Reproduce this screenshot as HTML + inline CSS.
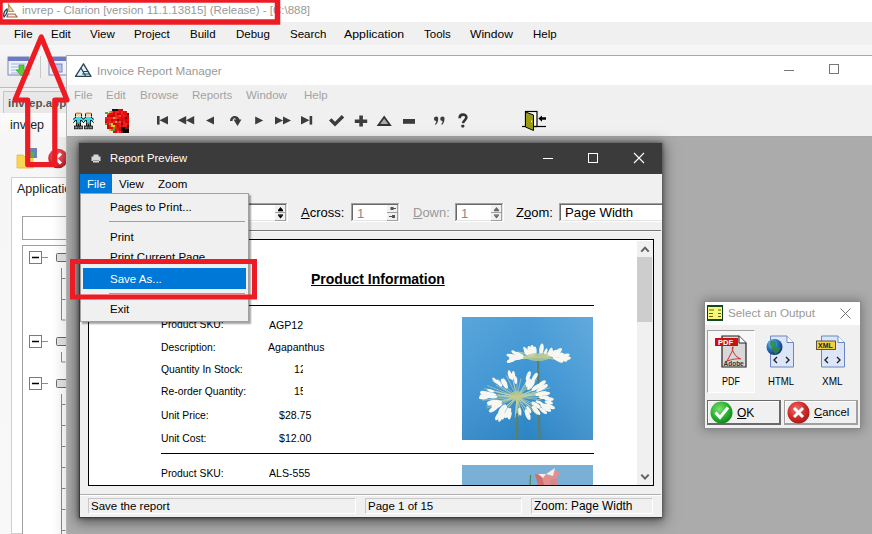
<!DOCTYPE html>
<html><head><meta charset="utf-8">
<style>
*{box-sizing:border-box;margin:0;padding:0}
html,body{width:872px;height:534px;overflow:hidden;background:#fff}
body{position:relative;font-family:"Liberation Sans",sans-serif;font-size:11.5px;color:#000}
.a{position:absolute}
.t{position:absolute;white-space:nowrap;line-height:1}
.rl{left:160.5px;font-size:11.5px;transform:scaleX(.9);transform-origin:0 0}
.rv{font-size:11.5px;transform:scaleX(.92);transform-origin:0 0}
.gm{color:#a3a3a3}
</style></head><body>

<!-- ===== Clarion IDE (background) ===== -->
<div class="t" style="left:22px;top:5px;font-size:11.5px;color:#999">invrep - Clarion [version 11.1.13815] (Release) - [C:\888]</div>
<svg class="a" style="left:2px;top:3px" width="18" height="16" viewBox="0 0 18 16">
<path d="M6.5 1.5 L11.5 8.5 L7 8.5 Z" fill="#f6e7a8" stroke="#b8925a" stroke-width="1.2"/>
<path d="M6 11 L13 11 L15 14 L5 14 Z" fill="#fde8d8" stroke="#a86040" stroke-width="1.2"/>
<path d="M5 6 C2 8 1 12 2 14 C4 12 6 9 5 6Z" fill="#d8eef8" stroke="#1c3c5a" stroke-width="1.2"/>
</svg>
<!-- menu bar -->
<div class="a" style="left:0;top:22px;width:872px;height:23px;background:#f0f0f0"></div>
<div class="t" style="left:14px;top:29px">File</div>
<div class="t" style="left:51px;top:29px">Edit</div>
<div class="t" style="left:90px;top:29px">View</div>
<div class="t" style="left:134px;top:29px">Project</div>
<div class="t" style="left:190px;top:29px">Build</div>
<div class="t" style="left:236px;top:29px">Debug</div>
<div class="t" style="left:290px;top:29px">Search</div>
<div class="t" style="left:344px;top:29px;transform:scaleX(1.07);transform-origin:0 0">Application</div>
<div class="t" style="left:424px;top:29px">Tools</div>
<div class="t" style="left:470px;top:29px;transform:scaleX(1.05);transform-origin:0 0">Window</div>
<div class="t" style="left:533px;top:29px">Help</div>
<!-- toolbar -->
<div class="a" style="left:0;top:45px;width:872px;height:43px;background:linear-gradient(#f7f7f7,#ebebeb)"></div>
<div class="a" style="left:0;top:87px;width:66px;height:1px;background:#bdbdbd"></div>
<svg class="a" style="left:7px;top:56px" width="60" height="22" viewBox="0 0 60 22">
<rect x="1" y="1" width="21" height="18" fill="#eef2fb" stroke="#7a86b8"/>
<rect x="1" y="1" width="21" height="4" fill="#6c78c8"/>
<g stroke="#a8b4d8"><path d="M4 8h15M4 11h15M4 14h15M4 17h15"/></g>
<path d="M12 9 h5 v5 h3 l-5.5 6 -5.5-6 h3z" fill="#5cc83a" stroke="#3a9a2a" stroke-width=".6"/>
<rect x="33" y="-3" width="1" height="25" fill="#c8c8c8"/>
<rect x="42" y="1" width="21" height="18" fill="#eef2fb" stroke="#7a86b8"/>
<rect x="42" y="1" width="21" height="4" fill="#6c78c8"/>
<rect x="46" y="8" width="9" height="8" fill="#b8c4e8" stroke="#7a86b8"/>
</svg>
<!-- left panel -->
<div class="a" style="left:0;top:88px;width:66px;height:446px;background:#f0f0f0"></div>
<div class="a" style="left:3px;top:91px;width:66px;height:23px;background:#e8e8e8;border:1px solid #c4c4c4"></div>
<div class="t" style="left:8px;top:98px;font-size:11.5px;font-weight:bold;color:#555">invrep.app</div>
<div class="a" style="left:0;top:113px;width:66px;height:421px;background:linear-gradient(#fbfbfb,#f6f6f6 25px,#f8f8f8)"></div>
<div class="t" style="left:10px;top:119px;font-size:12.5px;color:#222">invrep</div>
<svg class="a" style="left:16px;top:146px" width="52" height="24" viewBox="0 0 52 24">
<path d="M1 9 h6 l2 2 h8 v11 h-16z" fill="#f8d850" stroke="#e8b830" stroke-width=".8"/>
<rect x="14" y="2" width="7" height="10" fill="#6c82b8"/>
<path d="M13 6 h5 v5 h-5z" fill="#4cb848"/>
<defs><radialGradient id="rc" cx=".45" cy=".35" r=".7"><stop offset="0" stop-color="#f06a70"/><stop offset=".7" stop-color="#cc2a32"/><stop offset="1" stop-color="#a01820"/></radialGradient></defs>
<circle cx="42" cy="12.5" r="9.8" fill="url(#rc)"/>
<path d="M45 7.5 l-5.2 5 5.2 5" fill="none" stroke="#fff" stroke-width="3"/>
</svg>
<div class="a" style="left:11px;top:177px;width:60px;height:357px;background:#fff;border:1px solid #d0d0d0"></div>
<div class="t" style="left:17px;top:183px;font-size:12.5px;color:#222">Applicatio</div>
<div class="a" style="left:22px;top:216px;width:50px;height:24px;border:1px solid #a0a0a0;background:#fff"></div>
<div class="a" style="left:22px;top:245px;width:50px;height:300px;border:1px solid #a0a0a0;background:#fff"></div>
<svg class="a" style="left:22px;top:245px" width="44" height="289" viewBox="22 245 44 289">
<g fill="#fff" stroke="#7a7a7a" stroke-width="1">
<rect x="29.5" y="251.5" width="12" height="12"/><rect x="29.5" y="335.5" width="12" height="12"/><rect x="29.5" y="377.5" width="12" height="12"/>
</g>
<g stroke="#000" stroke-width="1.6"><path d="M32 257.5h7M32 341.5h7M32 383.5h7"/></g>
<g stroke="#8a8a8a" stroke-width="1" fill="none">
<path d="M42 257.5h6M42 341.5h6M42 383.5h6"/>
<path d="M61.5 268v52h4M61.5 278.5h4M61.5 299.5h4"/>
<path d="M61.5 352v10h4"/>
<path d="M61.5 394v140M61.5 404.5h4M61.5 425.5h4M61.5 446.5h4M61.5 467.5h4M61.5 488.5h4M61.5 509.5h4M61.5 530.5h4"/>
</g>
<g fill="#e4e4e4" stroke="#6a6a6a" stroke-width="1">
<rect x="56.5" y="253.5" width="12" height="8" rx="1"/><rect x="56.5" y="337.5" width="12" height="8" rx="1"/><rect x="56.5" y="379.5" width="12" height="8" rx="1"/>
</g>
</svg>
<div class="a" style="left:52px;top:137px;width:14px;height:397px;background:linear-gradient(90deg,rgba(0,0,0,0),rgba(0,0,0,.07))"></div>

<!-- ===== Invoice Report Manager ===== -->
<div class="a" style="left:66px;top:55px;width:806px;height:479px;background:#ababab;border-left:1px solid #b8b8b8;border-top:1px solid #a8a8a8"></div>
<div class="a" style="left:67px;top:56px;width:805px;height:29px;background:#fff"></div>
<svg class="a" style="left:74px;top:62px" width="19" height="16" viewBox="0 0 19 16">
<path d="M9.5 1.8 L17 14.4 L1.5 14.4 Z" fill="#dff3fb" stroke="#27455a" stroke-width="1.3" stroke-linejoin="round"/>
<path d="M7 6 L11.5 14 M9.5 9.5 L14.3 9.5 M8.2 12 L15.5 12" stroke="#27455a" stroke-width="1.2" fill="none"/>
</svg>
<div class="t" style="left:97px;top:65px;font-size:11.7px;color:#999">Invoice Report Manager</div>
<div class="a" style="left:784px;top:70px;width:10px;height:1px;background:#777"></div>
<div class="a" style="left:829px;top:64px;width:10px;height:10px;border:1px solid #777"></div>
<div class="a" style="left:67px;top:85px;width:805px;height:51px;background:#f0f0f0"></div>
<div class="t gm" style="left:74px;top:90px">File</div>
<div class="t gm" style="left:106px;top:90px">Edit</div>
<div class="t gm" style="left:140px;top:90px">Browse</div>
<div class="t gm" style="left:192px;top:90px">Reports</div>
<div class="t gm" style="left:246px;top:90px">Window</div>
<div class="t gm" style="left:304px;top:90px">Help</div>
<svg class="a" style="left:67px;top:105px" width="500" height="31" viewBox="67 105 500 31">
<!-- people -->
<g transform="translate(0 0)">
<rect x="76" y="113" width="5" height="3.5" fill="#f4d4a8"/><rect x="76" y="112.6" width="5" height="1.2" fill="#c87838"/>
<path d="M75.5 113.5 v3 M81.5 113.5 v3" stroke="#111" stroke-width="1"/>
<path d="M76 117 H81 L84 119.5 L82.5 121.5 H81 V123 H76 V121.5 H74.5 L73 119.5Z" fill="#30e0f0"/>
<path d="M73.2 119.3 L76 117 M81 117 L83.8 119.3 M73.3 122.8 L75.8 120 M83.7 122.8 L81.2 120" stroke="#111" stroke-width="1"/>
<path d="M76.5 120 v2.5 M80.5 120 v2.5" stroke="#111" stroke-width=".9"/>
<rect x="76" y="122.5" width="5" height="3.5" fill="#708070"/>
<path d="M76.5 122.5 v4 M80.5 122.5 v4 M78.5 124 v2.5" stroke="#111" stroke-width=".9"/>
<rect x="74.5" y="126" width="3.5" height="2.8" fill="#888" stroke="#111" stroke-width=".8"/>
<rect x="79" y="126" width="3.5" height="2.8" fill="#888" stroke="#111" stroke-width=".8"/>
</g><g transform="translate(10 0)">
<rect x="76" y="113" width="5" height="3.5" fill="#f4d4a8"/><rect x="76" y="112.6" width="5" height="1.2" fill="#c87838"/>
<path d="M75.5 113.5 v3 M81.5 113.5 v3" stroke="#111" stroke-width="1"/>
<path d="M76 117 H81 L84 119.5 L82.5 121.5 H81 V123 H76 V121.5 H74.5 L73 119.5Z" fill="#30e0f0"/>
<path d="M73.2 119.3 L76 117 M81 117 L83.8 119.3 M73.3 122.8 L75.8 120 M83.7 122.8 L81.2 120" stroke="#111" stroke-width="1"/>
<path d="M76.5 120 v2.5 M80.5 120 v2.5" stroke="#111" stroke-width=".9"/>
<rect x="76" y="122.5" width="5" height="3.5" fill="#708070"/>
<path d="M76.5 122.5 v4 M80.5 122.5 v4 M78.5 124 v2.5" stroke="#111" stroke-width=".9"/>
<rect x="74.5" y="126" width="3.5" height="2.8" fill="#888" stroke="#111" stroke-width=".8"/>
<rect x="79" y="126" width="3.5" height="2.8" fill="#888" stroke="#111" stroke-width=".8"/>
</g>
<!-- flower -->
<g shape-rendering="crispEdges"><rect x="113" y="109" width="2" height="2" fill="#ff4040"/><rect x="115" y="109" width="2" height="2" fill="#d00808"/><rect x="117" y="109" width="2" height="2" fill="#d00808"/><rect x="119" y="109" width="2" height="2" fill="#e01010"/><rect x="121" y="109" width="2" height="2" fill="#d00808"/><rect x="109" y="111" width="2" height="2" fill="#f0a020"/><rect x="111" y="111" width="2" height="2" fill="#ff4040"/><rect x="113" y="111" width="2" height="2" fill="#d00808"/><rect x="115" y="111" width="2" height="2" fill="#f02020"/><rect x="117" y="111" width="2" height="2" fill="#f02020"/><rect x="119" y="111" width="2" height="2" fill="#e01010"/><rect x="121" y="111" width="2" height="2" fill="#f02020"/><rect x="123" y="111" width="2" height="2" fill="#e01010"/><rect x="125" y="111" width="2" height="2" fill="#e01010"/><rect x="107" y="113" width="2" height="2" fill="#ff4040"/><rect x="109" y="113" width="2" height="2" fill="#e01010"/><rect x="111" y="113" width="2" height="2" fill="#e01010"/><rect x="113" y="113" width="2" height="2" fill="#d00808"/><rect x="115" y="113" width="2" height="2" fill="#f02020"/><rect x="117" y="113" width="2" height="2" fill="#d00808"/><rect x="119" y="113" width="2" height="2" fill="#d00808"/><rect x="121" y="113" width="2" height="2" fill="#f02020"/><rect x="123" y="113" width="2" height="2" fill="#e01010"/><rect x="125" y="113" width="2" height="2" fill="#e01010"/><rect x="127" y="113" width="2" height="2" fill="#700808"/><rect x="107" y="115" width="2" height="2" fill="#d00808"/><rect x="109" y="115" width="2" height="2" fill="#d00808"/><rect x="111" y="115" width="2" height="2" fill="#d00808"/><rect x="113" y="115" width="2" height="2" fill="#d00808"/><rect x="115" y="115" width="2" height="2" fill="#f02020"/><rect x="117" y="115" width="2" height="2" fill="#f02020"/><rect x="119" y="115" width="2" height="2" fill="#ff4040"/><rect x="121" y="115" width="2" height="2" fill="#e01010"/><rect x="123" y="115" width="2" height="2" fill="#f02020"/><rect x="125" y="115" width="2" height="2" fill="#e01010"/><rect x="127" y="115" width="2" height="2" fill="#d00808"/><rect x="105" y="117" width="2" height="2" fill="#f02020"/><rect x="107" y="117" width="2" height="2" fill="#f02020"/><rect x="109" y="117" width="2" height="2" fill="#f02020"/><rect x="111" y="117" width="2" height="2" fill="#f02020"/><rect x="113" y="117" width="2" height="2" fill="#f0a020"/><rect x="115" y="117" width="2" height="2" fill="#ff4040"/><rect x="117" y="117" width="2" height="2" fill="#f02020"/><rect x="119" y="117" width="2" height="2" fill="#e01010"/><rect x="121" y="117" width="2" height="2" fill="#e01010"/><rect x="123" y="117" width="2" height="2" fill="#e01010"/><rect x="125" y="117" width="2" height="2" fill="#700808"/><rect x="127" y="117" width="2" height="2" fill="#d00808"/><rect x="105" y="119" width="2" height="2" fill="#e01010"/><rect x="107" y="119" width="2" height="2" fill="#e01010"/><rect x="109" y="119" width="2" height="2" fill="#f02020"/><rect x="111" y="119" width="2" height="2" fill="#d00808"/><rect x="113" y="119" width="2" height="2" fill="#e01010"/><rect x="115" y="119" width="2" height="2" fill="#e01010"/><rect x="117" y="119" width="2" height="2" fill="#700808"/><rect x="119" y="119" width="2" height="2" fill="#e01010"/><rect x="121" y="119" width="2" height="2" fill="#d00808"/><rect x="123" y="119" width="2" height="2" fill="#e01010"/><rect x="125" y="119" width="2" height="2" fill="#d00808"/><rect x="127" y="119" width="2" height="2" fill="#e01010"/><rect x="105" y="121" width="2" height="2" fill="#d00808"/><rect x="107" y="121" width="2" height="2" fill="#f02020"/><rect x="109" y="121" width="2" height="2" fill="#f02020"/><rect x="111" y="121" width="2" height="2" fill="#e01010"/><rect x="113" y="121" width="2" height="2" fill="#f02020"/><rect x="115" y="121" width="2" height="2" fill="#f0a020"/><rect x="117" y="121" width="2" height="2" fill="#f02020"/><rect x="119" y="121" width="2" height="2" fill="#ff4040"/><rect x="121" y="121" width="2" height="2" fill="#d00808"/><rect x="123" y="121" width="2" height="2" fill="#f02020"/><rect x="125" y="121" width="2" height="2" fill="#d00808"/><rect x="127" y="121" width="2" height="2" fill="#d00808"/><rect x="105" y="123" width="2" height="2" fill="#60a030"/><rect x="107" y="123" width="2" height="2" fill="#e01010"/><rect x="109" y="123" width="2" height="2" fill="#60a030"/><rect x="111" y="123" width="2" height="2" fill="#e8c020"/><rect x="113" y="123" width="2" height="2" fill="#d00808"/><rect x="115" y="123" width="2" height="2" fill="#d00808"/><rect x="117" y="123" width="2" height="2" fill="#e01010"/><rect x="119" y="123" width="2" height="2" fill="#f02020"/><rect x="121" y="123" width="2" height="2" fill="#700808"/><rect x="123" y="123" width="2" height="2" fill="#f02020"/><rect x="125" y="123" width="2" height="2" fill="#f02020"/><rect x="127" y="123" width="2" height="2" fill="#e01010"/><rect x="107" y="125" width="2" height="2" fill="#d00808"/><rect x="109" y="125" width="2" height="2" fill="#f02020"/><rect x="111" y="125" width="2" height="2" fill="#e8c020"/><rect x="113" y="125" width="2" height="2" fill="#f0d030"/><rect x="115" y="125" width="2" height="2" fill="#f02020"/><rect x="117" y="125" width="2" height="2" fill="#d00808"/><rect x="119" y="125" width="2" height="2" fill="#f02020"/><rect x="121" y="125" width="2" height="2" fill="#e01010"/><rect x="123" y="125" width="2" height="2" fill="#f02020"/><rect x="125" y="125" width="2" height="2" fill="#f02020"/><rect x="127" y="125" width="2" height="2" fill="#700808"/><rect x="107" y="127" width="2" height="2" fill="#d00808"/><rect x="109" y="127" width="2" height="2" fill="#e01010"/><rect x="111" y="127" width="2" height="2" fill="#e01010"/><rect x="113" y="127" width="2" height="2" fill="#60a030"/><rect x="115" y="127" width="2" height="2" fill="#f02020"/><rect x="117" y="127" width="2" height="2" fill="#e01010"/><rect x="119" y="127" width="2" height="2" fill="#e01010"/><rect x="121" y="127" width="2" height="2" fill="#101010"/><rect x="123" y="127" width="2" height="2" fill="#101010"/><rect x="125" y="127" width="2" height="2" fill="#802010"/><rect x="127" y="127" width="2" height="2" fill="#802010"/><rect x="109" y="129" width="2" height="2" fill="#e8c020"/><rect x="111" y="129" width="2" height="2" fill="#60a030"/><rect x="113" y="129" width="2" height="2" fill="#60a030"/><rect x="115" y="129" width="2" height="2" fill="#e01010"/><rect x="117" y="129" width="2" height="2" fill="#f02020"/><rect x="119" y="129" width="2" height="2" fill="#d00808"/><rect x="121" y="129" width="2" height="2" fill="#101010"/><rect x="123" y="129" width="2" height="2" fill="#101010"/><rect x="125" y="129" width="2" height="2" fill="#101010"/><rect x="127" y="129" width="2" height="2" fill="#0a0a0a"/><rect x="113" y="131" width="2" height="2" fill="#e01010"/><rect x="115" y="131" width="2" height="2" fill="#e01010"/><rect x="117" y="131" width="2" height="2" fill="#ff4040"/><rect x="119" y="131" width="2" height="2" fill="#f02020"/><rect x="121" y="131" width="2" height="2" fill="#802010"/><rect x="123" y="131" width="2" height="2" fill="#0a0a0a"/><rect x="125" y="131" width="2" height="2" fill="#0a0a0a"/><rect x="127" y="131" width="2" height="2" fill="#0a0a0a"/><rect x="112" y="109" width="6" height="1.5" fill="#111"/><rect x="105" y="112" width="3" height="2" fill="#60a040"/></g>
<g fill="#3c3c3c">
<rect x="157" y="116" width="2.6" height="8.6"/><path d="M159.5 120.3 L168 116 V124.6Z"/>
<path d="M178 120.3 L186.2 116 V124.6Z M186 120.3 L194.2 116 V124.6Z"/>
<path d="M206 120.5 L214 116.5 V124.5Z"/>
<path d="M230 121 C230 115 238 114 239.5 119.5 L241.5 119.5 L237.5 126 L233.5 119.5 L236 119.5 C235 117.5 232.5 118 232.5 121Z"/>
<path d="M263.2 120.6 L255.2 116.6 V124.6Z"/>
<path d="M283 120.5 L275 116.4 V124.6Z M291 120.5 L283 116.4 V124.6Z"/>
<path d="M309.5 120.3 L301 116 V124.6Z"/><rect x="309.6" y="116" width="2.6" height="8.6"/>
<path d="M329 120.5 L331.5 118.2 L335 121.8 L341.7 115 L344.2 117.4 L335 126.6Z"/>
<path d="M359.3 115.6 h3.6 v3.8 h4.3 v3.5 h-4.3 v3.7 h-3.6 v-3.7 h-4.5 v-3.5 h4.5z"/>
<rect x="403" y="119" width="12" height="4.8"/>
<path d="M436 116.6 a2.2 2.2 0 0 1 2.2 2.4 c0 2.6 -1 4.6 -2.6 5.9 l-.6 -.6 c.8 -1 1.2 -2 1.3 -3.2 a2.2 2.2 0 0 1 -.3 -4.5z M442.3 116.6 a2.2 2.2 0 0 1 2.2 2.4 c0 2.6 -1 4.6 -2.6 5.9 l-.6 -.6 c.8 -1 1.2 -2 1.3 -3.2 a2.2 2.2 0 0 1 -.3 -4.5z"/>
</g>
<path d="M384.2 117 L390 125 H378.4Z" fill="#aaa" stroke="#333" stroke-width="1.8" stroke-linejoin="miter"/>
<path d="M459.6 118.2 C459.6 113.5 466.4 113.6 466.4 117.6 C466.4 119.6 463.3 120.6 463 123.2" fill="none" stroke="#333" stroke-width="2.6"/>
<rect x="461.3" y="124.8" width="3" height="2.8" rx=".8" fill="#333"/>
<!-- door -->
<rect x="525.5" y="111.5" width="11.5" height="15" fill="#fff" stroke="#000" stroke-width="1.2"/>
<path d="M522 126.5 H546" stroke="#000" stroke-width="1.2"/>
<path d="M525.5 112 L533.5 115 V130.5 L525.5 127Z" fill="#9c9c14" stroke="#000" stroke-width="1"/>
<rect x="531" y="120.5" width="1.2" height="1.8" fill="#f0f040"/>
<path d="M538.3 118.5 L542 115.4 V117.3 H546 V119.8 H542 V121.7Z" fill="#000"/>
</svg>
<div class="a" style="left:67px;top:136px;width:805px;height:1px;background:#a8a8a8"></div>

<!-- ===== Report Preview ===== -->
<div class="a" style="left:79px;top:143px;width:583px;height:375px;border-bottom-color:#555;background:#f0f0f0;border:1px solid #3a3a3a;border-top:none;border-right:none;box-shadow:0 0 3px 1px rgba(0,0,0,.3),0 2px 12px 2px rgba(0,0,0,.5)"></div>
<div class="a" style="left:79px;top:143px;width:583px;height:31px;background:#3b3b3b"></div>
<svg class="a" style="left:91px;top:154px" width="10" height="9" viewBox="0 0 10 9">
<path d="M2.5 0.5 H7.5 V2.5 H9.5 V7 H8 V8.5 H2 V7 H0.5 V2.5 H2.5Z" fill="#d8d8d8"/>
<rect x="2" y="6" width="6" height="1" fill="#9a9a9a"/>
</svg>
<div class="t" style="left:110px;top:153px;font-size:11.3px;color:#fff">Report Preview</div>
<div class="a" style="left:543px;top:158px;width:10px;height:1px;background:#fff"></div>
<div class="a" style="left:588px;top:153px;width:10px;height:10px;border:1px solid #fff"></div>
<svg class="a" style="left:633px;top:152px" width="12" height="12" viewBox="0 0 12 12"><path d="M1 1L11 11M11 1L1 11" stroke="#fff" stroke-width="1.1"/></svg>
<div class="a" style="left:80px;top:174px;width:32px;height:19px;background:#0078d7"></div>
<div class="t" style="left:87px;top:179px;color:#fff">File</div>
<div class="t" style="left:119px;top:179px">View</div>
<div class="t" style="left:158px;top:179px">Zoom</div>
<!-- toolbar -->
<svg class="a" style="left:200px;top:203px" width="462" height="19" viewBox="200 203 462 19" shape-rendering="crispEdges">
<!-- pages edit -->
<rect x="200" y="203" width="88" height="19" fill="#fff"/>
<path d="M200 203.5H288M200 204.5H287" stroke="#a0a0a0"/><path d="M200 204.5H287" stroke="#696969"/>
<path d="M287.5 203V222M200 221.5H288" stroke="#fff"/><path d="M286.5 204V221M200 220.5H287" stroke="#e3e3e3"/>
<rect x="275" y="205" width="11" height="7.5" fill="#f0f0f0"/><rect x="275" y="213" width="11" height="7.5" fill="#f0f0f0"/>
<path d="M275 212.5H286M285.5 205V212" stroke="#a0a0a0"/><path d="M275 220.5H286M285.5 213V220.5" stroke="#a0a0a0"/>
<!-- across edit -->
<rect x="351" y="203" width="49" height="19" fill="#fff"/>
<path d="M351 203.5H400M351.5 203V222" stroke="#a0a0a0"/><path d="M352 204.5H399M352.5 204V221" stroke="#696969"/>
<path d="M399.5 203V222M351 221.5H400" stroke="#fff"/><path d="M398.5 204V221M352 220.5H399" stroke="#e3e3e3"/>
<rect x="387" y="205" width="11" height="7.5" fill="#f0f0f0"/><rect x="387" y="213" width="11" height="7.5" fill="#f0f0f0"/>
<path d="M387 212.5H398M397.5 205V212" stroke="#a0a0a0"/><path d="M387 220.5H398M397.5 213V220.5" stroke="#a0a0a0"/>
<!-- down edit -->
<rect x="455" y="203" width="49" height="19" fill="#fff"/>
<path d="M455 203.5H504M455.5 203V222" stroke="#a0a0a0"/><path d="M456 204.5H503M456.5 204V221" stroke="#696969"/>
<path d="M503.5 203V222M455 221.5H504" stroke="#fff"/><path d="M502.5 204V221M456 220.5H503" stroke="#e3e3e3"/>
<rect x="491" y="205" width="11" height="7.5" fill="#f0f0f0"/><rect x="491" y="213" width="11" height="7.5" fill="#f0f0f0"/>
<path d="M491 212.5H502M501.5 205V212" stroke="#a0a0a0"/><path d="M491 220.5H502M501.5 213V220.5" stroke="#a0a0a0"/>
<!-- zoom combo -->
<rect x="559" y="203" width="103" height="19" fill="#fff"/>
<path d="M559 203.5H662M559.5 203V222" stroke="#a0a0a0"/><path d="M560 204.5H662M560.5 204V221" stroke="#696969"/>
<path d="M559 221.5H662" stroke="#fff"/><path d="M560 220.5H662" stroke="#e3e3e3"/>
</svg>
<svg class="a" style="left:270px;top:203px" width="240" height="19" viewBox="270 203 240 19">
<path d="M280.5 207 L283 210 H278Z" fill="#000"/><rect x="278" y="210" width="5" height="1.3" fill="#000"/>
<path d="M280.5 218.6 L283 215.6 H278Z" fill="#000"/><rect x="278" y="214.4" width="5" height="1.3" fill="#000"/>
<rect x="390.5" y="207" width="3" height="3" fill="#555"/><path d="M393 208.5H396" stroke="#555"/>
<rect x="392" y="215" width="3" height="3" fill="#555"/><path d="M389 216.5H392" stroke="#555"/>
<path d="M496.5 207 L499 210 H494Z" fill="#666"/><rect x="494" y="210" width="5" height="1.3" fill="#666"/>
<path d="M496.5 218.6 L499 215.6 H494Z" fill="#666"/><rect x="494" y="214.4" width="5" height="1.3" fill="#666"/>
</svg>
<div class="t" style="left:301px;top:206px;font-size:13px"><u>A</u>cross:</div>
<div class="t" style="left:357px;top:207px;font-size:13px;color:#8a8a8a">1</div>
<div class="t" style="left:413px;top:206px;font-size:13px;color:#999"><u>D</u>own:</div>
<div class="t" style="left:461px;top:207px;font-size:13px;color:#8a8a8a">1</div>
<div class="t" style="left:516px;top:206px;font-size:13px">Z<u>o</u>om:</div>
<div class="t" style="left:565px;top:206px;font-size:13.2px">Page Width</div>
<div class="a" style="left:80px;top:230px;width:581px;height:1px;background:#777"></div>
<div class="a" style="left:80px;top:231px;width:581px;height:1px;background:#f8f8f8"></div>
<!-- report area -->
<div class="a" style="left:88px;top:239px;width:566px;height:247px;border:1px solid #000;background:#fff"></div>
<div class="t" style="left:311px;top:272px;font-size:14px;font-weight:bold;text-decoration:underline">Product Information</div>
<div class="a" style="left:161px;top:305px;width:433px;height:1px;background:#000"></div>
<div class="a" style="left:161px;top:453px;width:433px;height:1px;background:#000"></div>
<div class="rl t" style="top:319px">Product SKU:</div>
<div class="rl t" style="top:342px">Description:</div>
<div class="rl t" style="top:364px">Quantity In Stock:</div>
<div class="rl t" style="top:386px">Re-order Quantity:</div>
<div class="rl t" style="top:410px">Unit Price:</div>
<div class="rl t" style="top:433px">Unit Cost:</div>
<div class="rl t" style="top:468px">Product SKU:</div>
<div class="rv t" style="left:269px;top:320px">AGP12</div>
<div class="rv t" style="left:268px;top:342px">Agapanthus</div>
<div class="a" style="left:290px;top:360px;width:13px;height:40px;overflow:hidden"><div class="rv t" style="left:4px;top:4px">12</div><div class="rv t" style="left:4px;top:26px">15</div></div>
<div class="rv t" style="left:279px;top:410px">$28.75</div>
<div class="rv t" style="left:279px;top:433px">$12.00</div>
<div class="rv t" style="left:269px;top:468px">ALS-555</div>
<!-- photo 1 -->
<svg class="a" style="left:462px;top:317px" width="131" height="123" viewBox="0 0 131 123">
<defs><linearGradient id="sky" x1="0" y1="0" x2="0" y2="1"><stop offset="0" stop-color="#4c9ed8"/><stop offset="0.55" stop-color="#3b93d2"/><stop offset="1" stop-color="#2c84c4"/></linearGradient><linearGradient id="skyh" x1="0" y1="0" x2="1" y2="0"><stop offset="0" stop-color="#fff" stop-opacity=".08"/><stop offset=".5" stop-color="#fff" stop-opacity="0"/><stop offset="1" stop-color="#fff" stop-opacity=".12"/></linearGradient></defs>
<rect width="131" height="123" fill="url(#sky)"/><rect width="131" height="123" fill="url(#skyh)"/>
<path d="M55.5 82 L55 123" stroke="#5d7f63" stroke-width="2.2"/>
<path d="M76 42 L77.5 123" stroke="#5d7f63" stroke-width="2.2"/>
<path d="M76.0 40.0 L63.5 36.3" stroke="#c8d8a8" stroke-width=".8" opacity=".8"/>
<path d="M76.0 40.0 L86.3 36.2" stroke="#c8d8a8" stroke-width=".8" opacity=".8"/>
<path d="M76.0 40.0 L79.2 34.3" stroke="#c8d8a8" stroke-width=".8" opacity=".8"/>
<path d="M76.0 40.0 L53.6 41.7" stroke="#c8d8a8" stroke-width=".8" opacity=".8"/>
<path d="M76.0 40.0 L55.1 42.1" stroke="#c8d8a8" stroke-width=".8" opacity=".8"/>
<path d="M76.0 40.0 L58.7 41.1" stroke="#c8d8a8" stroke-width=".8" opacity=".8"/>
<path d="M76.0 40.0 L67.4 33.0" stroke="#c8d8a8" stroke-width=".8" opacity=".8"/>
<path d="M76.0 40.0 L56.5 40.0" stroke="#c8d8a8" stroke-width=".8" opacity=".8"/>
<path d="M76.0 40.0 L90.9 33.3" stroke="#c8d8a8" stroke-width=".8" opacity=".8"/>
<path d="M76.0 40.0 L82.9 34.5" stroke="#c8d8a8" stroke-width=".8" opacity=".8"/>
<path d="M76.0 40.0 L91.6 41.9" stroke="#c8d8a8" stroke-width=".8" opacity=".8"/>
<path d="M76.0 40.0 L96.4 39.6" stroke="#c8d8a8" stroke-width=".8" opacity=".8"/>
<path d="M76.0 40.0 L58.0 39.6" stroke="#c8d8a8" stroke-width=".8" opacity=".8"/>
<path d="M76.0 40.0 L56.2 34.9" stroke="#c8d8a8" stroke-width=".8" opacity=".8"/>
<path d="M76.0 40.0 L52.3 38.5" stroke="#c8d8a8" stroke-width=".8" opacity=".8"/>
<path d="M76.0 40.0 L87.8 35.2" stroke="#c8d8a8" stroke-width=".8" opacity=".8"/>
<path d="M76.0 40.0 L79.4 35.5" stroke="#c8d8a8" stroke-width=".8" opacity=".8"/>
<path d="M76.0 40.0 L57.4 41.4" stroke="#c8d8a8" stroke-width=".8" opacity=".8"/>
<path d="M76.0 40.0 L91.3 35.7" stroke="#c8d8a8" stroke-width=".8" opacity=".8"/>
<path d="M76.0 40.0 L58.9 35.4" stroke="#c8d8a8" stroke-width=".8" opacity=".8"/>
<path d="M76.0 40.0 L72.0 34.6" stroke="#c8d8a8" stroke-width=".8" opacity=".8"/>
<path d="M76.0 40.0 L100.5 37.7" stroke="#c8d8a8" stroke-width=".8" opacity=".8"/>
<path d="M76.0 40.0 L54.7 36.9" stroke="#c8d8a8" stroke-width=".8" opacity=".8"/>
<path d="M76.0 40.0 L79.0 32.5" stroke="#c8d8a8" stroke-width=".8" opacity=".8"/>
<path d="M76.0 40.0 L92.7 36.9" stroke="#c8d8a8" stroke-width=".8" opacity=".8"/>
<path d="M76.0 40.0 L92.4 42.1" stroke="#c8d8a8" stroke-width=".8" opacity=".8"/>
<path d="M76.0 40.0 L67.0 33.3" stroke="#c8d8a8" stroke-width=".8" opacity=".8"/>
<path d="M76.0 40.0 L53.0 39.3" stroke="#c8d8a8" stroke-width=".8" opacity=".8"/>
<path d="M76.0 40.0 L52.1 42.4" stroke="#c8d8a8" stroke-width=".8" opacity=".8"/>
<path d="M76.0 40.0 L97.7 37.1" stroke="#c8d8a8" stroke-width=".8" opacity=".8"/>
<path d="M76.0 40.0 L96.7 40.0" stroke="#c8d8a8" stroke-width=".8" opacity=".8"/>
<path d="M76.0 40.0 L93.9 35.5" stroke="#c8d8a8" stroke-width=".8" opacity=".8"/>
<path d="M76.0 40.0 L83.4 34.3" stroke="#c8d8a8" stroke-width=".8" opacity=".8"/>
<path d="M76.0 40.0 L104.9 38.9" stroke="#c8d8a8" stroke-width=".8" opacity=".8"/>
<ellipse cx="73.2" cy="33.1" rx="3.7" ry="1.4" transform="rotate(264 73.2 33.1)" fill="#f7f7f2"/>
<ellipse cx="95.3" cy="35.4" rx="6.0" ry="2.3" transform="rotate(318 95.3 35.4)" fill="#f7f7f2"/>
<ellipse cx="96.9" cy="38.7" rx="4.5" ry="1.7" transform="rotate(347 96.9 38.7)" fill="#f7f7f2"/>
<ellipse cx="87.9" cy="36.3" rx="4.7" ry="1.8" transform="rotate(310 87.9 36.3)" fill="#f7f7f2"/>
<ellipse cx="56.9" cy="39.1" rx="3.6" ry="1.4" transform="rotate(190 56.9 39.1)" fill="#f7f7f2"/>
<ellipse cx="93.6" cy="37.7" rx="4.1" ry="1.6" transform="rotate(334 93.6 37.7)" fill="#f7f7f2"/>
<ellipse cx="63.4" cy="33.2" rx="3.7" ry="1.4" transform="rotate(244 63.4 33.2)" fill="#f7f7f2"/>
<ellipse cx="70.8" cy="33.6" rx="5.7" ry="2.2" transform="rotate(258 70.8 33.6)" fill="#f7f7f2"/>
<ellipse cx="103.6" cy="38.3" rx="4.2" ry="1.6" transform="rotate(347 103.6 38.3)" fill="#f7f7f2"/>
<ellipse cx="68.3" cy="34.4" rx="5.7" ry="2.2" transform="rotate(250 68.3 34.4)" fill="#f7f7f2"/>
<ellipse cx="94.6" cy="41.8" rx="3.9" ry="1.5" transform="rotate(380 94.6 41.8)" fill="#f7f7f2"/>
<ellipse cx="57.3" cy="37.6" rx="4.7" ry="1.8" transform="rotate(206 57.3 37.6)" fill="#f7f7f2"/>
<ellipse cx="83.7" cy="34.7" rx="3.5" ry="1.3" transform="rotate(291 83.7 34.7)" fill="#f7f7f2"/>
<ellipse cx="68.5" cy="34.4" rx="4.9" ry="1.9" transform="rotate(251 68.5 34.4)" fill="#f7f7f2"/>
<ellipse cx="100.9" cy="42.3" rx="4.8" ry="1.8" transform="rotate(379 100.9 42.3)" fill="#f7f7f2"/>
<ellipse cx="88.3" cy="33.9" rx="3.6" ry="1.4" transform="rotate(298 88.3 33.9)" fill="#f7f7f2"/>
<ellipse cx="103.2" cy="40.7" rx="5.7" ry="2.2" transform="rotate(366 103.2 40.7)" fill="#f7f7f2"/>
<ellipse cx="97.5" cy="38.1" rx="4.5" ry="1.7" transform="rotate(341 97.5 38.1)" fill="#f7f7f2"/>
<ellipse cx="50.5" cy="40.6" rx="3.7" ry="1.4" transform="rotate(175 50.5 40.6)" fill="#f7f7f2"/>
<ellipse cx="56.1" cy="41.3" rx="3.9" ry="1.5" transform="rotate(166 56.1 41.3)" fill="#f7f7f2"/>
<ellipse cx="64.4" cy="36.1" rx="3.5" ry="1.3" transform="rotate(232 64.4 36.1)" fill="#f7f7f2"/>
<ellipse cx="56.9" cy="39.4" rx="4.4" ry="1.7" transform="rotate(186 56.9 39.4)" fill="#f7f7f2"/>
<ellipse cx="49.9" cy="43.1" rx="5.0" ry="1.9" transform="rotate(156 49.9 43.1)" fill="#f7f7f2"/>
<ellipse cx="55.1" cy="39.4" rx="4.4" ry="1.7" transform="rotate(186 55.1 39.4)" fill="#f7f7f2"/>
<ellipse cx="65.5" cy="35.6" rx="5.6" ry="2.1" transform="rotate(237 65.5 35.6)" fill="#f7f7f2"/>
<ellipse cx="96.8" cy="43.0" rx="4.7" ry="1.8" transform="rotate(388 96.8 43.0)" fill="#f7f7f2"/>
<ellipse cx="57.0" cy="40.8" rx="4.4" ry="1.7" transform="rotate(171 57.0 40.8)" fill="#f7f7f2"/>
<ellipse cx="52.7" cy="35.9" rx="3.9" ry="1.5" transform="rotate(214 52.7 35.9)" fill="#f7f7f2"/>
<ellipse cx="49.2" cy="43.2" rx="4.8" ry="1.8" transform="rotate(156 49.2 43.2)" fill="#f7f7f2"/>
<ellipse cx="51.6" cy="39.4" rx="3.6" ry="1.4" transform="rotate(185 51.6 39.4)" fill="#f7f7f2"/>
<ellipse cx="79.5" cy="32.1" rx="5.7" ry="2.2" transform="rotate(277 79.5 32.1)" fill="#f7f7f2"/>
<ellipse cx="91.5" cy="36.2" rx="4.4" ry="1.7" transform="rotate(317 91.5 36.2)" fill="#f7f7f2"/>
<ellipse cx="49.2" cy="38.7" rx="4.8" ry="1.8" transform="rotate(190 49.2 38.7)" fill="#f7f7f2"/>
<ellipse cx="96.2" cy="37.7" rx="4.1" ry="1.5" transform="rotate(337 96.2 37.7)" fill="#f7f7f2"/>
<ellipse cx="76" cy="40" rx="12" ry="4" fill="#b8c890" opacity=".8"/>
<path d="M55.0 80.0 L68.5 57.9" stroke="#c8d8a8" stroke-width=".8" opacity=".8"/>
<path d="M55.0 80.0 L74.8 62.5" stroke="#c8d8a8" stroke-width=".8" opacity=".8"/>
<path d="M55.0 80.0 L68.2 60.7" stroke="#c8d8a8" stroke-width=".8" opacity=".8"/>
<path d="M55.0 80.0 L59.1 98.6" stroke="#c8d8a8" stroke-width=".8" opacity=".8"/>
<path d="M55.0 80.0 L42.5 90.6" stroke="#c8d8a8" stroke-width=".8" opacity=".8"/>
<path d="M55.0 80.0 L79.0 82.8" stroke="#c8d8a8" stroke-width=".8" opacity=".8"/>
<path d="M55.0 80.0 L53.2 100.6" stroke="#c8d8a8" stroke-width=".8" opacity=".8"/>
<path d="M55.0 80.0 L81.0 75.1" stroke="#c8d8a8" stroke-width=".8" opacity=".8"/>
<path d="M55.0 80.0 L88.0 70.8" stroke="#c8d8a8" stroke-width=".8" opacity=".8"/>
<path d="M55.0 80.0 L79.7 75.2" stroke="#c8d8a8" stroke-width=".8" opacity=".8"/>
<path d="M55.0 80.0 L59.3 95.4" stroke="#c8d8a8" stroke-width=".8" opacity=".8"/>
<path d="M55.0 80.0 L62.6 94.6" stroke="#c8d8a8" stroke-width=".8" opacity=".8"/>
<path d="M55.0 80.0 L30.5 63.9" stroke="#c8d8a8" stroke-width=".8" opacity=".8"/>
<path d="M55.0 80.0 L69.8 64.5" stroke="#c8d8a8" stroke-width=".8" opacity=".8"/>
<path d="M55.0 80.0 L36.2 62.1" stroke="#c8d8a8" stroke-width=".8" opacity=".8"/>
<path d="M55.0 80.0 L81.3 90.3" stroke="#c8d8a8" stroke-width=".8" opacity=".8"/>
<path d="M55.0 80.0 L82.4 68.4" stroke="#c8d8a8" stroke-width=".8" opacity=".8"/>
<path d="M55.0 80.0 L55.0 61.6" stroke="#c8d8a8" stroke-width=".8" opacity=".8"/>
<path d="M55.0 80.0 L69.1 99.6" stroke="#c8d8a8" stroke-width=".8" opacity=".8"/>
<path d="M55.0 80.0 L38.8 99.0" stroke="#c8d8a8" stroke-width=".8" opacity=".8"/>
<path d="M55.0 80.0 L80.8 76.9" stroke="#c8d8a8" stroke-width=".8" opacity=".8"/>
<path d="M55.0 80.0 L26.4 93.6" stroke="#c8d8a8" stroke-width=".8" opacity=".8"/>
<path d="M55.0 80.0 L51.4 65.2" stroke="#c8d8a8" stroke-width=".8" opacity=".8"/>
<path d="M55.0 80.0 L70.5 90.6" stroke="#c8d8a8" stroke-width=".8" opacity=".8"/>
<path d="M55.0 80.0 L82.2 67.7" stroke="#c8d8a8" stroke-width=".8" opacity=".8"/>
<path d="M55.0 80.0 L75.1 97.6" stroke="#c8d8a8" stroke-width=".8" opacity=".8"/>
<path d="M55.0 80.0 L85.2 77.5" stroke="#c8d8a8" stroke-width=".8" opacity=".8"/>
<path d="M55.0 80.0 L38.1 95.4" stroke="#c8d8a8" stroke-width=".8" opacity=".8"/>
<path d="M55.0 80.0 L68.6 89.8" stroke="#c8d8a8" stroke-width=".8" opacity=".8"/>
<path d="M55.0 80.0 L84.8 76.3" stroke="#c8d8a8" stroke-width=".8" opacity=".8"/>
<path d="M55.0 80.0 L20.6 76.1" stroke="#c8d8a8" stroke-width=".8" opacity=".8"/>
<path d="M55.0 80.0 L24.0 89.1" stroke="#c8d8a8" stroke-width=".8" opacity=".8"/>
<path d="M55.0 80.0 L65.7 66.3" stroke="#c8d8a8" stroke-width=".8" opacity=".8"/>
<path d="M55.0 80.0 L54.7 96.4" stroke="#c8d8a8" stroke-width=".8" opacity=".8"/>
<path d="M55.0 80.0 L56.7 99.5" stroke="#c8d8a8" stroke-width=".8" opacity=".8"/>
<path d="M55.0 80.0 L53.4 97.7" stroke="#c8d8a8" stroke-width=".8" opacity=".8"/>
<path d="M55.0 80.0 L78.5 96.9" stroke="#c8d8a8" stroke-width=".8" opacity=".8"/>
<path d="M55.0 80.0 L38.5 94.4" stroke="#c8d8a8" stroke-width=".8" opacity=".8"/>
<path d="M55.0 80.0 L25.2 68.5" stroke="#c8d8a8" stroke-width=".8" opacity=".8"/>
<path d="M55.0 80.0 L24.6 91.1" stroke="#c8d8a8" stroke-width=".8" opacity=".8"/>
<path d="M55.0 80.0 L26.6 79.8" stroke="#c8d8a8" stroke-width=".8" opacity=".8"/>
<path d="M55.0 80.0 L35.1 78.0" stroke="#c8d8a8" stroke-width=".8" opacity=".8"/>
<path d="M55.0 80.0 L33.8 85.6" stroke="#c8d8a8" stroke-width=".8" opacity=".8"/>
<path d="M55.0 80.0 L87.7 80.5" stroke="#c8d8a8" stroke-width=".8" opacity=".8"/>
<path d="M55.0 80.0 L67.9 96.2" stroke="#c8d8a8" stroke-width=".8" opacity=".8"/>
<path d="M55.0 80.0 L50.5 61.0" stroke="#c8d8a8" stroke-width=".8" opacity=".8"/>
<path d="M55.0 80.0 L42.0 96.7" stroke="#c8d8a8" stroke-width=".8" opacity=".8"/>
<path d="M55.0 80.0 L24.4 72.6" stroke="#c8d8a8" stroke-width=".8" opacity=".8"/>
<path d="M55.0 80.0 L77.7 91.9" stroke="#c8d8a8" stroke-width=".8" opacity=".8"/>
<path d="M55.0 80.0 L55.2 96.2" stroke="#c8d8a8" stroke-width=".8" opacity=".8"/>
<path d="M55.0 80.0 L58.9 61.5" stroke="#c8d8a8" stroke-width=".8" opacity=".8"/>
<path d="M55.0 80.0 L25.3 71.9" stroke="#c8d8a8" stroke-width=".8" opacity=".8"/>
<path d="M55.0 80.0 L78.0 70.6" stroke="#c8d8a8" stroke-width=".8" opacity=".8"/>
<path d="M55.0 80.0 L33.7 67.9" stroke="#c8d8a8" stroke-width=".8" opacity=".8"/>
<path d="M55.0 80.0 L24.1 78.4" stroke="#c8d8a8" stroke-width=".8" opacity=".8"/>
<path d="M55.0 80.0 L27.8 85.6" stroke="#c8d8a8" stroke-width=".8" opacity=".8"/>
<path d="M55.0 80.0 L20.3 83.2" stroke="#c8d8a8" stroke-width=".8" opacity=".8"/>
<path d="M55.0 80.0 L44.3 58.5" stroke="#c8d8a8" stroke-width=".8" opacity=".8"/>
<path d="M55.0 80.0 L77.4 74.3" stroke="#c8d8a8" stroke-width=".8" opacity=".8"/>
<path d="M55.0 80.0 L22.3 71.5" stroke="#c8d8a8" stroke-width=".8" opacity=".8"/>
<ellipse cx="67.6" cy="66.7" rx="3.8" ry="1.4" transform="rotate(302 67.6 66.7)" fill="#f7f7f2"/>
<ellipse cx="33.8" cy="85.4" rx="4.1" ry="1.6" transform="rotate(159 33.8 85.4)" fill="#f7f7f2"/>
<ellipse cx="83.0" cy="89.2" rx="5.5" ry="2.1" transform="rotate(26 83.0 89.2)" fill="#f7f7f2"/>
<ellipse cx="74.0" cy="70.4" rx="5.3" ry="2.0" transform="rotate(323 74.0 70.4)" fill="#f7f7f2"/>
<ellipse cx="42.4" cy="66.7" rx="5.7" ry="2.2" transform="rotate(238 42.4 66.7)" fill="#f7f7f2"/>
<ellipse cx="79.2" cy="76.7" rx="5.9" ry="2.2" transform="rotate(348 79.2 76.7)" fill="#f7f7f2"/>
<ellipse cx="32.0" cy="91.4" rx="6.0" ry="2.3" transform="rotate(143 32.0 91.4)" fill="#f7f7f2"/>
<ellipse cx="66.8" cy="66.1" rx="4.6" ry="1.7" transform="rotate(300 66.8 66.1)" fill="#f7f7f2"/>
<ellipse cx="28.6" cy="78.3" rx="4.0" ry="1.5" transform="rotate(186 28.6 78.3)" fill="#f7f7f2"/>
<ellipse cx="41.6" cy="99.4" rx="3.5" ry="1.3" transform="rotate(115 41.6 99.4)" fill="#f7f7f2"/>
<ellipse cx="28.7" cy="73.8" rx="3.5" ry="1.3" transform="rotate(199 28.7 73.8)" fill="#f7f7f2"/>
<ellipse cx="40.0" cy="97.8" rx="4.8" ry="1.8" transform="rotate(119 40.0 97.8)" fill="#f7f7f2"/>
<ellipse cx="87.9" cy="89.4" rx="5.5" ry="2.1" transform="rotate(23 87.9 89.4)" fill="#f7f7f2"/>
<ellipse cx="77.7" cy="77.3" rx="4.2" ry="1.6" transform="rotate(350 77.7 77.3)" fill="#f7f7f2"/>
<ellipse cx="86.8" cy="85.4" rx="4.2" ry="1.6" transform="rotate(14 86.8 85.4)" fill="#f7f7f2"/>
<ellipse cx="74.0" cy="93.4" rx="5.8" ry="2.2" transform="rotate(47 74.0 93.4)" fill="#f7f7f2"/>
<ellipse cx="65.6" cy="64.7" rx="3.9" ry="1.5" transform="rotate(295 65.6 64.7)" fill="#f7f7f2"/>
<ellipse cx="81.1" cy="70.3" rx="5.3" ry="2.0" transform="rotate(331 81.1 70.3)" fill="#f7f7f2"/>
<ellipse cx="74.0" cy="88.0" rx="5.2" ry="2.0" transform="rotate(32 74.0 88.0)" fill="#f7f7f2"/>
<ellipse cx="34.8" cy="86.8" rx="5.8" ry="2.2" transform="rotate(153 34.8 86.8)" fill="#f7f7f2"/>
<ellipse cx="33.0" cy="63.5" rx="3.7" ry="1.4" transform="rotate(228 33.0 63.5)" fill="#f7f7f2"/>
<ellipse cx="69.0" cy="68.2" rx="5.7" ry="2.1" transform="rotate(308 69.0 68.2)" fill="#f7f7f2"/>
<ellipse cx="29.6" cy="85.1" rx="4.9" ry="1.9" transform="rotate(163 29.6 85.1)" fill="#f7f7f2"/>
<ellipse cx="77.8" cy="72.5" rx="3.8" ry="1.5" transform="rotate(334 77.8 72.5)" fill="#f7f7f2"/>
<ellipse cx="30.3" cy="77.2" rx="3.8" ry="1.4" transform="rotate(190 30.3 77.2)" fill="#f7f7f2"/>
<ellipse cx="66.8" cy="92.6" rx="4.0" ry="1.5" transform="rotate(58 66.8 92.6)" fill="#f7f7f2"/>
<ellipse cx="45.1" cy="96.0" rx="5.4" ry="2.1" transform="rotate(112 45.1 96.0)" fill="#f7f7f2"/>
<ellipse cx="47.8" cy="98.6" rx="3.9" ry="1.5" transform="rotate(104 47.8 98.6)" fill="#f7f7f2"/>
<ellipse cx="42.5" cy="92.0" rx="4.1" ry="1.6" transform="rotate(125 42.5 92.0)" fill="#f7f7f2"/>
<ellipse cx="87.0" cy="82.1" rx="4.9" ry="1.9" transform="rotate(6 87.0 82.1)" fill="#f7f7f2"/>
<ellipse cx="65.6" cy="97.6" rx="5.8" ry="2.2" transform="rotate(68 65.6 97.6)" fill="#f7f7f2"/>
<ellipse cx="81.2" cy="93.8" rx="4.6" ry="1.7" transform="rotate(38 81.2 93.8)" fill="#f7f7f2"/>
<ellipse cx="21.4" cy="80.7" rx="4.5" ry="1.7" transform="rotate(178 21.4 80.7)" fill="#f7f7f2"/>
<ellipse cx="23.5" cy="79.1" rx="6.0" ry="2.3" transform="rotate(182 23.5 79.1)" fill="#f7f7f2"/>
<ellipse cx="36.5" cy="98.7" rx="5.3" ry="2.0" transform="rotate(123 36.5 98.7)" fill="#f7f7f2"/>
<ellipse cx="37.0" cy="66.2" rx="4.4" ry="1.7" transform="rotate(229 37.0 66.2)" fill="#f7f7f2"/>
<ellipse cx="77.1" cy="85.2" rx="3.7" ry="1.4" transform="rotate(20 77.1 85.2)" fill="#f7f7f2"/>
<ellipse cx="53.6" cy="63.2" rx="3.9" ry="1.5" transform="rotate(267 53.6 63.2)" fill="#f7f7f2"/>
<ellipse cx="84.1" cy="91.4" rx="5.7" ry="2.2" transform="rotate(30 84.1 91.4)" fill="#f7f7f2"/>
<ellipse cx="42.7" cy="65.0" rx="4.1" ry="1.6" transform="rotate(241 42.7 65.0)" fill="#f7f7f2"/>
<ellipse cx="47.5" cy="98.1" rx="3.9" ry="1.5" transform="rotate(106 47.5 98.1)" fill="#f7f7f2"/>
<ellipse cx="31.1" cy="85.7" rx="5.9" ry="2.2" transform="rotate(160 31.1 85.7)" fill="#f7f7f2"/>
<ellipse cx="84.0" cy="76.6" rx="4.1" ry="1.6" transform="rotate(350 84.0 76.6)" fill="#f7f7f2"/>
<ellipse cx="80.5" cy="76.3" rx="4.4" ry="1.7" transform="rotate(348 80.5 76.3)" fill="#f7f7f2"/>
<ellipse cx="82.1" cy="80.1" rx="4.7" ry="1.8" transform="rotate(0 82.1 80.1)" fill="#f7f7f2"/>
<ellipse cx="30.5" cy="79.7" rx="4.8" ry="1.8" transform="rotate(181 30.5 79.7)" fill="#f7f7f2"/>
<ellipse cx="80.4" cy="80.5" rx="3.7" ry="1.4" transform="rotate(2 80.4 80.5)" fill="#f7f7f2"/>
<ellipse cx="37.1" cy="88.7" rx="3.6" ry="1.4" transform="rotate(144 37.1 88.7)" fill="#f7f7f2"/>
<ellipse cx="46.7" cy="95.7" rx="5.0" ry="1.9" transform="rotate(110 46.7 95.7)" fill="#f7f7f2"/>
<ellipse cx="23.1" cy="76.1" rx="5.1" ry="2.0" transform="rotate(191 23.1 76.1)" fill="#f7f7f2"/>
<ellipse cx="47.7" cy="57.7" rx="4.5" ry="1.7" transform="rotate(258 47.7 57.7)" fill="#f7f7f2"/>
<ellipse cx="38.5" cy="101.2" rx="3.9" ry="1.5" transform="rotate(117 38.5 101.2)" fill="#f7f7f2"/>
<ellipse cx="50.0" cy="59.7" rx="3.6" ry="1.4" transform="rotate(261 50.0 59.7)" fill="#f7f7f2"/>
<ellipse cx="72.6" cy="60.3" rx="5.1" ry="1.9" transform="rotate(301 72.6 60.3)" fill="#f7f7f2"/>
<ellipse cx="51.6" cy="57.9" rx="3.8" ry="1.5" transform="rotate(264 51.6 57.9)" fill="#f7f7f2"/>
<ellipse cx="26.5" cy="77.1" rx="5.6" ry="2.1" transform="rotate(189 26.5 77.1)" fill="#f7f7f2"/>
<ellipse cx="66.3" cy="59.0" rx="5.0" ry="1.9" transform="rotate(290 66.3 59.0)" fill="#f7f7f2"/>
<ellipse cx="79.6" cy="66.9" rx="5.2" ry="2.0" transform="rotate(321 79.6 66.9)" fill="#f7f7f2"/>
<ellipse cx="57.8" cy="94.6" rx="3.8" ry="1.5" transform="rotate(83 57.8 94.6)" fill="#f7f7f2"/>
<ellipse cx="40.2" cy="91.8" rx="5.6" ry="2.1" transform="rotate(130 40.2 91.8)" fill="#f7f7f2"/>
<ellipse cx="55" cy="79" rx="7" ry="5" fill="#c0c888" opacity=".7"/>
</svg>
<svg class="a" style="left:462px;top:465px" width="131" height="20" viewBox="0 0 131 20">
<rect width="131" height="20" fill="#7aafd6"/>
<path d="M68 20 L68.5 10" stroke="#4a8a4a" stroke-width="1.2"/>
<path d="M73 9 L81 10 L86 20 L76 20Z" fill="#d07070"/>
<path d="M80 12 L92 5 L98 8 L94 14 L90 20 L82 20Z" fill="#e09090"/>
<path d="M84 9 L93 3 L91 11Z M76 9 L84 9 L81 13Z" fill="#f4eeee"/>
<path d="M88 15 L96 13 L95 20 L88 20Z" fill="#d88888"/>
</svg>
<div class="a" style="left:637px;top:241px;width:16px;height:244px;background:#f0f0f0"></div>
<div class="a" style="left:637px;top:257px;width:15px;height:65px;background:#cdcdcd"></div>
<svg class="a" style="left:637px;top:241px" width="16" height="244" viewBox="0 0 16 244">
<path d="M4.3 10.6 L8 6.6 L11.7 10.6" fill="none" stroke="#606060" stroke-width="2"/>
<path d="M4.3 233.6 L8 237.6 L11.7 233.6" fill="none" stroke="#606060" stroke-width="2"/>
</svg>
<!-- status bar -->
<div class="a" style="left:80px;top:494px;width:581px;height:1px;background:#b0b0b0"></div><div class="a" style="left:80px;top:495px;width:581px;height:1px;background:#fff"></div>
<div class="a" style="left:88px;top:498px;width:268px;height:16px;border:1px solid #c8c8c8;border-right-color:#fff;border-bottom-color:#fff"></div>
<div class="t" style="left:91px;top:501px">Save the report</div>
<div class="a" style="left:365px;top:498px;width:157px;height:16px;border:1px solid #c8c8c8;border-right-color:#fff;border-bottom-color:#fff"></div>
<div class="t" style="left:368px;top:501px">Page 1 of 15</div>
<div class="a" style="left:531px;top:498px;width:122px;height:16px;border:1px solid #c8c8c8;border-right-color:#fff;border-bottom-color:#fff"></div>
<div class="t" style="left:534px;top:501px;font-size:11.9px">Zoom: Page Width</div>

<!-- ===== File dropdown ===== -->
<div class="a" style="left:80px;top:193px;width:169px;height:129px;background:#f0f0f0;border:1px solid #a0a0a0;box-shadow:2px 2px 1.5px rgba(0,0,0,.35)"></div>
<div class="t" style="left:110px;top:202px">Pages to Print...</div>
<div class="a" style="left:109px;top:221px;width:136px;height:1px;background:#a0a0a0"></div>
<div class="t" style="left:110px;top:232px">Print</div>
<div class="t" style="left:110px;top:252px">Print Current Page</div>
<div class="a" style="left:83px;top:268px;width:163px;height:21px;background:#0078d7"></div>
<div class="t" style="left:110px;top:274px;color:#fff">Save As...</div>
<div class="a" style="left:109px;top:293px;width:136px;height:1px;background:#a0a0a0"></div>
<div class="t" style="left:110px;top:304px">Exit</div>

<!-- ===== Select an Output ===== -->
<div class="a" style="left:704px;top:301px;width:157px;height:128px;background:#f0f0f0;border:1px solid #8a8a8a;box-shadow:0 0 10px 1px rgba(0,0,0,.3)"></div>
<div class="a" style="left:705px;top:302px;width:155px;height:23px;background:#fff"></div>
<svg class="a" style="left:707px;top:305px" width="16" height="16" viewBox="0 0 16 16">
<rect x="0.5" y="0.5" width="15" height="15" fill="#f8f878" stroke="#0a3a0a"/>
<rect x="0" y="0" width="16" height="2" fill="#104a20"/><rect x="0" y="14" width="16" height="2" fill="#104a20"/>
<g stroke="#606010" stroke-width="1"><path d="M2 5h5M11 5h3M2 8.5h4M11 8.5h3M2 11.5h4M11 11.5h3"/></g>
</svg>
<div class="t" style="left:728px;top:307px;font-size:11.7px;color:#999">Select an Output</div>
<svg class="a" style="left:840px;top:308px" width="11" height="11" viewBox="0 0 11 11"><path d="M0.5 0.5L10.5 10.5M10.5 0.5L0.5 10.5" stroke="#777" stroke-width="1"/></svg>
<!-- pdf button pressed -->
<div class="a" style="left:707px;top:330px;width:48px;height:63px;border:1px solid #a0a0a0;border-right-color:#fff;border-bottom-color:#fff;background:#f7f7f7"></div>
<svg class="a" style="left:713px;top:334px" width="36" height="36" viewBox="0 0 36 36">
<path d="M9 2 H26 L33 9 V33 H9Z" fill="#d8d8d8" stroke="#222" stroke-width="1.2"/>
<path d="M26 2 V9 H33" fill="#fff" stroke="#222" stroke-width="1"/>
<rect x="2" y="4" width="23" height="8" fill="#cc1010"/>
<text x="5" y="11" font-family="Liberation Sans" font-size="7.5" font-weight="bold" fill="#fff">PDF</text>
<path d="M14 27 C18 20 21 14 20 13 C18 13 20 22 28 25 C22 24 17 26 14 27Z" fill="none" stroke="#d04040" stroke-width="1.1"/>
<text x="10.5" y="32" font-family="Liberation Sans" font-size="6.5" font-weight="bold" fill="#333">Adobe</text>
</svg>
<div class="t" style="left:722px;top:376px;font-size:10.5px;transform:scaleX(.85);transform-origin:0 0">PDF</div>
<svg class="a" style="left:765px;top:334px" width="32" height="36" viewBox="0 0 32 36">
<path d="M5.5 2 H22 L28.5 8.5 V33 H5.5Z" fill="#dce6f8" stroke="#6a86c0" stroke-width="1"/>
<path d="M22 2 V8.5 H28.5" fill="#fff" stroke="#6a86c0"/>
<path d="M12 23 l-3 3 3 3 M21 23 l3 3 -3 3" fill="none" stroke="#222" stroke-width="1.4"/>
<defs><radialGradient id="gl" cx=".35" cy=".3" r=".75"><stop offset="0" stop-color="#8fd0f8"/><stop offset=".45" stop-color="#2a78c0"/><stop offset="1" stop-color="#10306a"/></radialGradient></defs>
<circle cx="9.5" cy="13" r="8" fill="url(#gl)"/>
<path d="M6 7 C9 6 12 8 11 11 C10 13 13 14 15 13 C16 16 13 19 10 20 C9 17 6 16 7 13 C5 12 4 10 6 7Z" fill="#2e8a3a" opacity=".85"/>
</svg>
<div class="t" style="left:768px;top:376px;font-size:10.5px;transform:scaleX(.91);transform-origin:0 0">HTML</div>
<svg class="a" style="left:815px;top:334px" width="32" height="36" viewBox="0 0 32 36">
<path d="M6.5 2 H23 L29.5 8.5 V33 H6.5Z" fill="#dce6f8" stroke="#6a86c0" stroke-width="1"/>
<path d="M23 2 V8.5 H29.5" fill="#fff" stroke="#6a86c0"/>
<path d="M13 23 l-3 3 3 3 M22 23 l3 3 -3 3" fill="none" stroke="#222" stroke-width="1.4"/>
<rect x="1.5" y="7" width="19" height="8.5" fill="#f0d040" stroke="#333" stroke-width=".8"/>
<text x="3" y="14" font-family="Liberation Sans" font-size="7" font-weight="bold" fill="#222">XML</text>
</svg>
<div class="t" style="left:822px;top:376px;font-size:10.5px;transform:scaleX(.95);transform-origin:0 0">XML</div>
<!-- buttons -->
<div class="a" style="left:707px;top:400px;width:74px;height:25px;background:#f0f0f0;border:1px solid #696969;box-shadow:inset -1px -1px 0 #696969, inset 1px 1px 0 #fff"></div>
<svg class="a" style="left:710px;top:401px" width="24" height="24" viewBox="0 0 24 24">
<defs><radialGradient id="gg" cx=".4" cy=".35" r=".7"><stop offset="0" stop-color="#7ee070"/><stop offset=".6" stop-color="#28b030"/><stop offset="1" stop-color="#108018"/></radialGradient></defs>
<circle cx="11.5" cy="11.5" r="11" fill="url(#gg)"/>
<path d="M5.5 11.5 L10 16.5 L18 6.5" fill="none" stroke="#fff" stroke-width="3"/>
</svg>
<div class="t" style="left:737px;top:407px;font-size:12px"><u>O</u>K</div>
<div class="a" style="left:784px;top:400px;width:74px;height:25px;background:#f0f0f0;border:1px solid #a0a0a0;box-shadow:inset -1px -1px 0 #a0a0a0, inset 1px 1px 0 #fff"></div>
<svg class="a" style="left:787px;top:401px" width="24" height="24" viewBox="0 0 24 24">
<defs><radialGradient id="rg" cx=".4" cy=".35" r=".7"><stop offset="0" stop-color="#f07070"/><stop offset=".6" stop-color="#d02828"/><stop offset="1" stop-color="#a01818"/></radialGradient></defs>
<circle cx="11.5" cy="11.5" r="11" fill="url(#rg)"/>
<path d="M7 7 L16 16 M16 7 L7 16" fill="none" stroke="#fff" stroke-width="3"/>
</svg>
<div class="t" style="left:814px;top:407px;font-size:11.3px"><u>C</u>ancel</div>

<!-- ===== annotations ===== -->
<svg class="a" style="left:0;top:0" width="872" height="534" viewBox="0 0 872 534">
<rect x="0" y="0" width="277.5" height="22" fill="none" stroke="#ed1c24" stroke-width="5.5"/>
<polygon points="41.3,37 67,100 54.8,100 54.8,164.6 27.7,164.6 27.7,100 15,100" fill="none" stroke="#ed1c24" stroke-width="5.2" stroke-linejoin="round"/>
<rect x="72.5" y="261.5" width="182" height="35.5" fill="none" stroke="#ed1c24" stroke-width="5"/>
</svg>
</body></html>
